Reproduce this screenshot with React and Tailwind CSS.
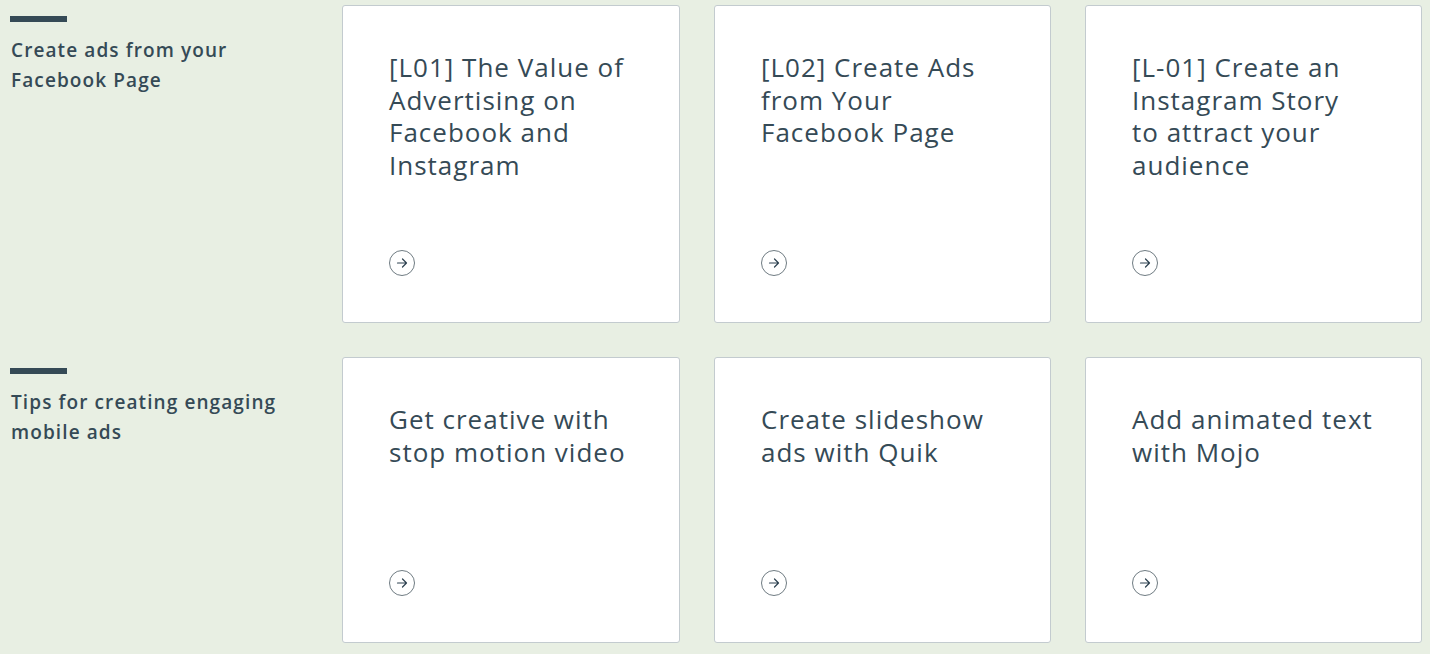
import React from 'react';

const sections = [
  {
    label: ['Create ads from your', 'Facebook Page'],
    height: 'h-[318px]',
    cards: [
      '[L01] The Value of Advertising on Facebook and Instagram',
      '[L02] Create Ads from Your Facebook Page',
      '[L-01] Create an Instagram Story to\u00a0attract your audience',
    ],
  },
  {
    label: ['Tips for creating engaging', 'mobile ads'],
    height: 'h-[286px]',
    cards: [
      'Get creative with stop motion video',
      'Create slideshow ads with Quik',
      'Add animated text with Mojo',
    ],
  },
];

const ArrowCircle = () => (
  <svg width="26" height="26" viewBox="0 0 26 26" fill="none">
    <circle cx="13" cy="13" r="12.5" stroke="#6f7b82" strokeWidth="1" />
    <path d="M8.5 13h9M13.5 9l4 4-4 4" stroke="#2d4150" strokeWidth="1.2" strokeLinecap="round" strokeLinejoin="round" />
  </svg>
);

const Card = ({ title, height }) => (
  <div className={`${height} bg-white border border-[#c3cbcf] rounded-[3px] px-[46px] pt-[46px] pb-[46px] flex flex-col justify-between`}>
    <h3 className="text-[26px] leading-[32.5px] text-[#354a56] font-medium tracking-[1px] -mt-[1px]">{title}</h3>
    <ArrowCircle />
  </div>
);

export default function App() {
  return (
    <div
      className="min-h-screen bg-[#e8efe3] pl-[10px] pr-[8px] pt-[5px] flex flex-col gap-[34px]"
      style={{ fontFamily: '"Open Sans", "Liberation Sans", sans-serif' }}
    >
      {sections.map((s, i) => (
        <div key={i} className="flex">
          <div className="w-[332px] shrink-0 pt-[11px]">
            <div className="w-[57px] h-[6px] bg-[#354a56]" />
            <p className="mt-[13px] pl-[1px] text-[19px] leading-[30px] font-semibold text-[#354a56] tracking-[1.1px]">
              {s.label[0]}
              <br />
              {s.label[1]}
            </p>
          </div>
          <div className="grid grid-cols-[338px_337px_337px] gap-[34px]">
            {s.cards.map((c, j) => (
              <Card key={j} title={c} height={s.height} />
            ))}
          </div>
        </div>
      ))}
    </div>
  );
}
